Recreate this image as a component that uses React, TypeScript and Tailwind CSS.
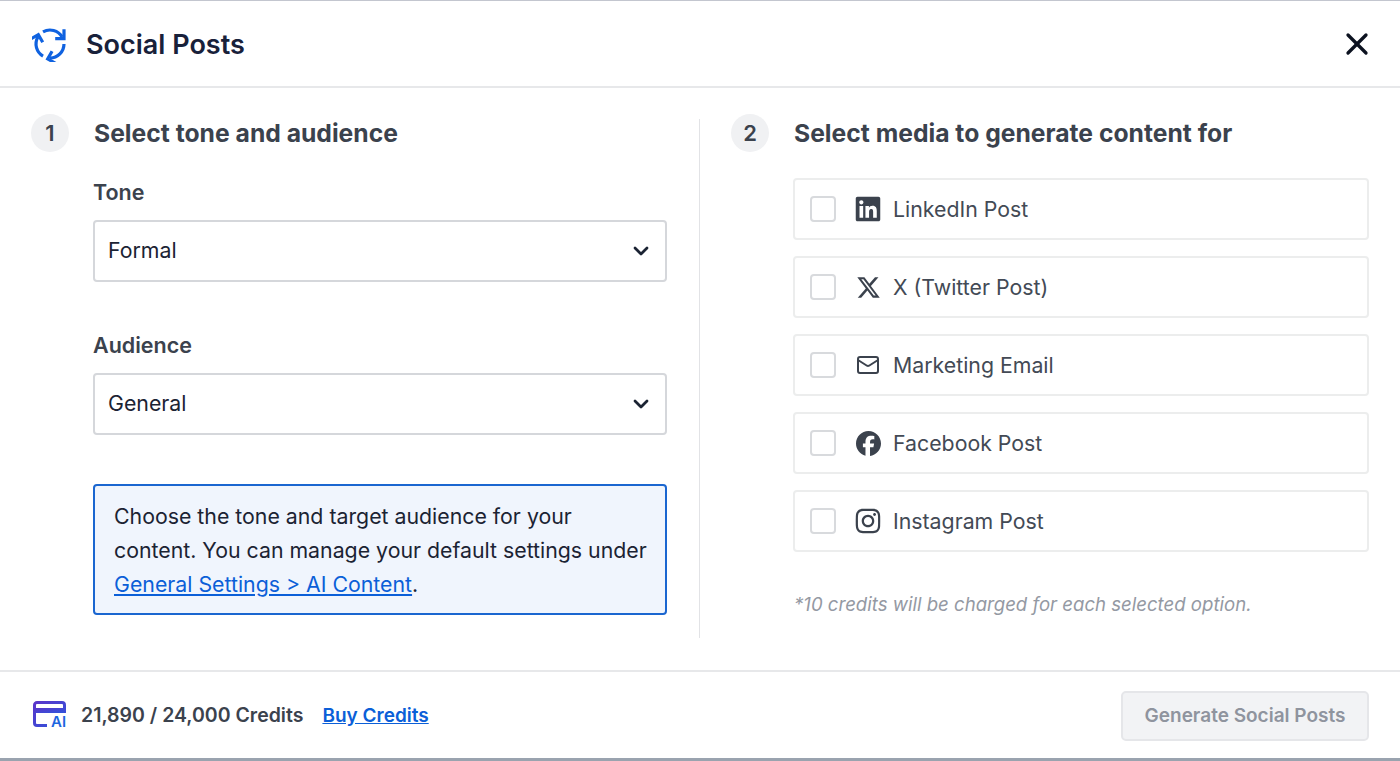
import React from 'react';
import { ChevronDown, Mail, X } from 'lucide-react';
import { FaFacebook, FaInstagram, FaLinkedin, FaXTwitter } from 'react-icons/fa6';

const RefreshLogo = () => (
  <svg width="36" height="36" viewBox="0 0 36 36" fill="none" stroke="#0f62e0" strokeWidth="3.2" className="shrink-0">
    {[0, 120, 240].map((r) => (
      <g key={r} transform={`rotate(${r} 18 18)`}>
        <path d="M11 5.9A14 14 0 0 1 30.1 11" />
        <path d="M32 3.2V12.6H23.2" />
      </g>
    ))}
  </svg>
);

const CreditsIcon = () => (
  <svg width="36" height="31" viewBox="0 0 36 31" fill="none" className="shrink-0">
    <defs>
      <linearGradient id="credits" x1="0" y1="0" x2="1" y2="1">
        <stop offset="0" stopColor="#5a35c9" />
        <stop offset="1" stopColor="#2f55dc" />
      </linearGradient>
    </defs>
    <path
      d="M14 24.5H4a2.5 2.5 0 0 1-2.5-2.5V4A2.5 2.5 0 0 1 4 1.5h25A2.5 2.5 0 0 1 31.5 4v8"
      stroke="url(#credits)"
      strokeWidth="3"
    />
    <rect x="2" y="7" width="29" height="5" fill="url(#credits)" />
    <text x="18" y="26" fontFamily="Inter, sans-serif" fontSize="15" fontWeight="600" fill="#1d66e0">
      AI
    </text>
  </svg>
);

const StepHeading = ({ step, title }: { step: number; title: string }) => (
  <div className="flex items-center gap-[25px]">
    <div className="flex h-[38px] w-[38px] shrink-0 items-center justify-center rounded-full bg-[#f0f1f3] text-[22px] font-semibold text-[#3b424d]">
      {step}
    </div>
    <h2 className="text-[24.7px] leading-[38px] font-bold text-[#3b424d]">{title}</h2>
  </div>
);

const SelectField = ({ label, value }: { label: string; value: string }) => (
  <div>
    <div className="mb-[13px] text-[21.5px] leading-[30px] font-semibold text-[#3b424d]">{label}</div>
    <div className="flex h-[62px] items-center justify-between rounded-[4px] border-2 border-[#d5d7db] pr-[12px] pl-[13px] text-[21.3px] text-[#1b2333]">
      <span>{value}</span>
      <ChevronDown size={24} strokeWidth={2.8} className="text-[#1b2333]" />
    </div>
  </div>
);

const mediaOptions = [
  { label: 'LinkedIn Post', icon: <FaLinkedin size={28} /> },
  { label: 'X (Twitter Post)', icon: <FaXTwitter size={25} /> },
  { label: 'Marketing Email', icon: <Mail size={24} strokeWidth={2} /> },
  { label: 'Facebook Post', icon: <FaFacebook size={25} /> },
  { label: 'Instagram Post', icon: <FaInstagram size={28} /> },
];

export default function App() {
  return (
    <div className="flex h-[761px] w-[1400px] flex-col overflow-hidden border-t border-b-[3px] border-t-[#c3c6cf] border-b-[#9aa3af] bg-white font-['Inter',sans-serif]">
      <header className="flex h-[87px] shrink-0 items-center justify-between border-b-2 border-[#e7e8ea] pr-[25px] pl-[32px]">
        <div className="flex items-center gap-[18px]">
          <RefreshLogo />
          <h1 className="pt-[3px] text-[27px] font-semibold text-[#18213a]">Social Posts</h1>
        </div>
        <X size={36} strokeWidth={2.2} className="text-[#0c1220]" />
      </header>

      <main className="flex h-[582px] shrink-0 pt-[31px] pb-[32px]">
        <section className="-mt-[5px] w-[667px] shrink-0 pl-[31px]">
          <StepHeading step={1} title="Select tone and audience" />
          <div className="mt-[25px] flex flex-col gap-[48px] pl-[62px]">
            <SelectField label="Tone" value="Formal" />
            <SelectField label="Audience" value="General" />
            <div className="mt-[1px] h-[131px] rounded-[4px] border-2 border-[#1a66d0] bg-[#f0f5fd] pt-[13px] pl-[19px] text-[21.3px] leading-[34px] text-[#1b2333]">
              Choose the tone and target audience for your
              <br />
              content. You can manage your default settings under
              <br />
              <a href="#" className="text-[#0b5fd8] underline">
                General Settings &gt; AI Content
              </a>
              .
            </div>
          </div>
        </section>

        <div className="ml-[32px] w-[1px] shrink-0 bg-[#e2e3e6]" />

        <section className="-mt-[5px] min-w-0 flex-1 pr-[31px] pl-[31px]">
          <StepHeading step={2} title="Select media to generate content for" />
          <div className="mt-[26px] flex flex-col gap-[16px] pl-[62px]">
            {mediaOptions.map((option) => (
              <div
                key={option.label}
                className="flex h-[62px] items-center rounded-[4px] border-2 border-[#eceded] pl-[15px] text-[21.3px] text-[#434a55]"
              >
                <div className="h-[26px] w-[26px] shrink-0 rounded-[4px] border-2 border-[#d8dadd]" />
                <div className="ml-[18px] flex w-[28px] shrink-0 justify-center text-[#3b424d]">{option.icon}</div>
                <span className="ml-[11px] pt-[2px]">{option.label}</span>
              </div>
            ))}
          </div>
          <p className="mt-[40px] pl-[63px] text-[18.6px] leading-[24px] text-[#9499a3] italic">
            *10 credits will be charged for each selected option.
          </p>
        </section>
      </main>

      <footer className="flex min-h-0 flex-1 items-center justify-between border-t-2 border-[#e7e8ea] pt-[2px] pr-[31px] pl-[33px]">
        <div className="flex items-center">
          <CreditsIcon />
          <span className="ml-[12px] text-[19.5px] font-semibold text-[#3b424d]">21,890 / 24,000 Credits</span>
          <a href="#" className="ml-[19px] text-[19px] font-semibold text-[#0b5fd8] underline">
            Buy Credits
          </a>
        </div>
        <button className="flex h-[50px] w-[248px] items-center justify-center rounded-[5px] border-2 border-[#e5e6e9] bg-[#f2f3f5] text-[19px] font-semibold text-[#8f949e]">
          Generate Social Posts
        </button>
      </footer>
    </div>
  );
}
